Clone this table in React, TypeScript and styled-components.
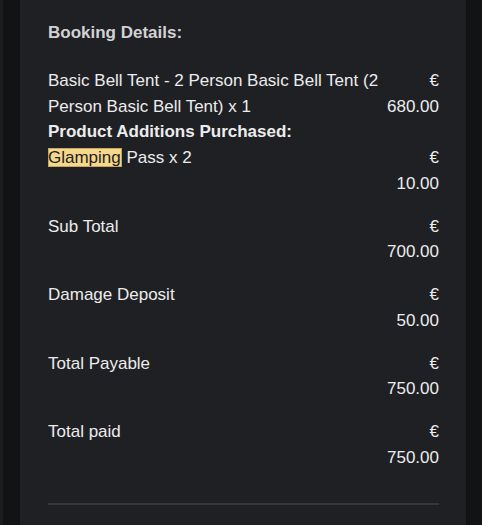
import React from "react";
import styled, { createGlobalStyle } from "styled-components";

const Global = createGlobalStyle`
  html, body { margin: 0; padding: 0; background: #131416; }
  body { font-family: "Liberation Sans", Arial, Helvetica, sans-serif; }
`;

const Page = styled.div`
  display: flex;
  min-height: 525px;
  border-left: 3px solid #1b1c1e;
  padding: 0 16px 0 17px;
  background: #121315;
`;

const Card = styled.div`
  flex: 1;
  background: #1f2024;
  padding: 20px 27px 40px 28px;
  color: #ebebeb;
  font-size: 17px;
  line-height: 25.75px;
`;

const Heading = styled.div`
  font-weight: bold;
  color: #d2d2d4;
  margin-bottom: 22px;
`;

const Row = styled.div<{ $gap?: number }>`
  display: grid;
  grid-template-columns: 1fr auto;
  column-gap: 4px;
  margin-top: ${(p) => p.$gap ?? 0}px;
`;

const Label = styled.div<{ $bold?: boolean }>`
  font-weight: ${(p) => (p.$bold ? "bold" : "normal")};
  color: #ececec;
`;

const Amount = styled.div`
  text-align: right;
  white-space: nowrap;
  color: #ececec;
`;

const Line = styled.span`
  display: block;
`;

const Mark = styled.mark`
  background: #f6d88c;
  color: #1e1e1e;
  padding: 0 1px 0 0;
  box-shadow: inset 0 0 0 1px #c8a860;
`;

const Divider = styled.hr`
  border: none;
  border-top: 2px solid #35363a;
  margin: 32px 0 0 0;
`;

const Money = ({ value }: { value: string }) => (
  <Amount>
    <Line>€</Line>
    <Line>{value}</Line>
  </Amount>
);

const totals = [
  { label: "Sub Total", value: "700.00" },
  { label: "Damage Deposit", value: "50.00" },
  { label: "Total Payable", value: "750.00" },
  { label: "Total paid", value: "750.00" },
];

export default function App() {
  return (
    <>
      <Global />
      <Page>
        <Card>
          <Heading>Booking Details:</Heading>
          <Row>
            <Label>Basic Bell Tent - 2 Person Basic Bell Tent (2 Person Basic Bell Tent) x 1</Label>
            <Money value="680.00" />
          </Row>
          <Row>
            <Label $bold>Product Additions Purchased:</Label>
            <span />
          </Row>
          <Row>
            <Label>
              <Mark>Glamping</Mark> Pass x 2
            </Label>
            <Money value="10.00" />
          </Row>
          {totals.map((t) => (
            <Row key={t.label} $gap={17}>
              <Label>{t.label}</Label>
              <Money value={t.value} />
            </Row>
          ))}
          <Divider />
        </Card>
      </Page>
    </>
  );
}
